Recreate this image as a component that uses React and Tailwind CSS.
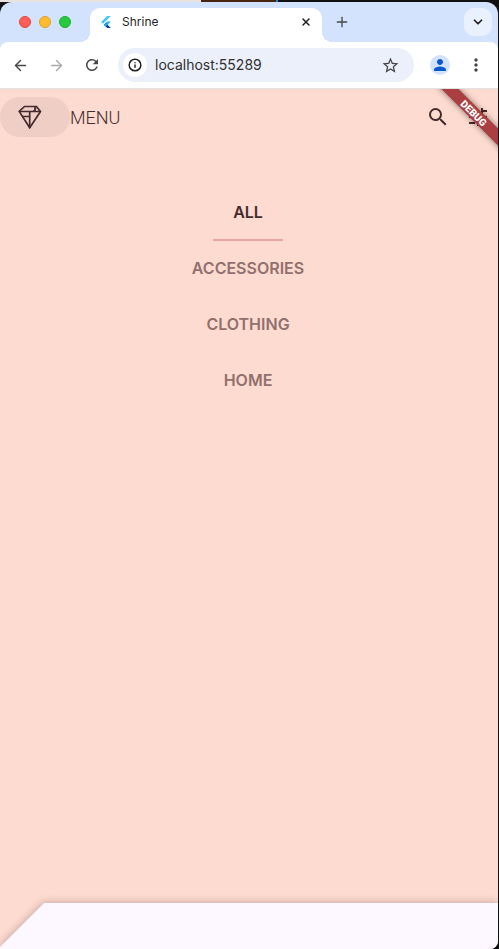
import { ArrowLeft, ArrowRight, Info, Plus, X, ChevronDown } from "lucide-react";
import { MdRefresh, MdStarBorder, MdPerson, MdMoreVert, MdSearch, MdTune } from "react-icons/md";

function FlutterLogo() {
  return (
    <svg viewBox="0 0 24 24" className="h-3 w-3 shrink-0" aria-hidden="true">
      <path d="M14.300 0 2.300 12 6 15.700 21.700 0z" fill="#47c5fb" />
      <path d="M14.300 11 7.900 17.500l3.700 3.700L21.700 11z" fill="#1fb0f5" />
      <path d="m11.600 13.800-3.700 3.700 6.400 6.500h7.400l-6.500-6.500z" fill="#03479b" />
      <path d="m7.900 17.500 3.700-3.700 3.700 3.700-3.700 3.700z" fill="#22a9f1" />
    </svg>
  );
}

function Diamond() {
  return (
    <svg viewBox="0 0 24 24" className="h-6 w-6" fill="none" stroke="currentColor" strokeWidth="1.700" aria-hidden="true">
      <path d="M6.500 1.500h12l4 5-10.800 16.300L1.200 6.500z" />
      <path d="M1.200 6.500h21.300M11.700 6.500v16.300M4.500 11.500h7.200M17 1.500v5" />
      <path d="m14.500 6.500 4-3.500" strokeWidth="1" />
    </svg>
  );
}

function TabStrip() {
  return (
    <div className="flex h-10 rounded-t-xl bg-[#d3e3fd]">
      <div className="flex w-20 shrink-0 items-center gap-2 pl-[19px]">
        <span className="h-3 w-3 rounded-full border border-[#e0443e] bg-[#ff5f57]" />
        <span className="h-3 w-3 rounded-full border border-[#dea123] bg-[#febc2e]" />
        <span className="h-3 w-3 rounded-full border border-[#1aab29] bg-[#28c840]" />
      </div>
      <div className="flex min-w-0 flex-1 items-end">
        <span className="h-2.5 w-2.5 shrink-0 bg-[radial-gradient(circle_at_0_0,#d3e3fd_10px,#fff_10px)]" />
        <div className="mt-1.5 flex h-[34px] min-w-0 max-w-58 flex-1 items-center self-start rounded-t-[10px] bg-white pr-2.5 pb-1.5 pl-2.5">
          <FlutterLogo />
          <span className="flex-1 truncate pl-2.5 text-xs text-[#1f1f1f]">Shrine</span>
          <button aria-label="Close tab"><X size={12} strokeWidth={3} color="#1f1f1f" /></button>
        </div>
        <span className="h-2.5 w-2.5 shrink-0 bg-[radial-gradient(circle_at_100%_0,#d3e3fd_10px,#fff_10px)]" />
        <button aria-label="New tab" className="mb-3 ml-0.5"><Plus size={16} strokeWidth={2} color="#474747" /></button>
      </div>
      <button aria-label="Search tabs" className="mt-1.5 mr-1.5 grid h-7 w-7 place-items-center rounded-[10px] bg-[#e9f0fe]">
        <ChevronDown size={14} strokeWidth={3} color="#1f1f1f" />
      </button>
    </div>
  );
}

function Toolbar() {
  return (
    <div className="bg-[#d3e3fd]">
      <div className="flex h-[47px] items-center rounded-t-lg border-b border-[#dfe3e3] bg-white px-3 text-[#474747]">
        <button aria-label="Back"><ArrowLeft size={17} /></button>
        <button aria-label="Forward" className="ml-[19px] text-[#aaa]"><ArrowRight size={17} /></button>
        <button aria-label="Reload" className="ml-[18px]"><MdRefresh size={18} /></button>
        <div className="ml-[17px] flex h-[34px] min-w-0 flex-1 items-center rounded-full bg-[#ecf0fa] pr-3.5 pl-[5px]">
          <button aria-label="Site information" className="grid h-6 w-6 shrink-0 place-items-center rounded-full bg-white">
            <Info size={14} strokeWidth={2.5} color="#1f1f1f" />
          </button>
          <input aria-label="Address" defaultValue="localhost:55289" className="ml-2 min-w-0 flex-1 bg-transparent text-sm text-[#303030] outline-none" />
          <button aria-label="Bookmark"><MdStarBorder size={19} /></button>
        </div>
        <button aria-label="Profile" className="ml-4 grid h-5 w-5 place-items-center rounded-full bg-[#d3e3fd] text-[#0b57d0]">
          <MdPerson size={18} />
        </button>
        <button aria-label="Browser menu" className="ml-4"><MdMoreVert size={20} /></button>
      </div>
    </div>
  );
}

function Header() {
  return (
    <header className="flex h-14 items-center pr-2">
      <button aria-label="Close menu" className="flex h-10 w-[70px] items-center rounded-full bg-[#efcec5] pl-[18px]">
        <Diamond />
      </button>
      <h1 className="flex-1 pt-0.5 font-[Roboto,sans-serif] text-lg font-light">MENU</h1>
      <button aria-label="Search" className="mr-4"><MdSearch size={24} /></button>
      <button aria-label="Filter"><MdTune size={24} /></button>
    </header>
  );
}

function Categories() {
  const items = ["ALL", "ACCESSORIES", "CLOTHING", "HOME"];
  return (
    <nav className="mt-10 flex flex-1 flex-col items-center pr-0.5 font-semibold">
      {items.map((item, i) => (
        <a
          key={item}
          href={"#" + item.toLowerCase()}
          className={i === 0 ? "flex h-14 w-[70px] flex-col items-center border-b-2 border-[#eaa4a4] pt-[15px]" : "h-14 pt-[15px] text-[#91706d]"}
        >
          {item}
        </a>
      ))}
    </nav>
  );
}

export default function App() {
  return (
    <div className="flex min-h-screen flex-col bg-[#111] pr-px font-[Inter,sans-serif]">
      <div className="flex h-0.5">
        <div className="w-[201px] bg-[#e9e3df]" />
        <div className="w-[75px] bg-[#49250f]" />
        <div className="w-0.5 bg-[#1686d9]" />
      </div>
      <TabStrip />
      <Toolbar />
      <main className="relative flex flex-1 flex-col overflow-hidden rounded-br-lg bg-[#fddbd0] text-[#442b2d]">
        <Header />
        <Categories />
        <div className="drop-shadow-[0_0_4px_rgba(68,43,45,0.35)]">
          <div className="h-[46px] bg-[#fdf7ff] [clip-path:polygon(44px_0,100%_0,100%_100%,0_100%,0_44px)]" />
        </div>
        <div className="absolute top-[18px] -right-10 flex h-3 w-32 rotate-45 items-center justify-center bg-[#ab3e40] font-[Roboto,sans-serif] text-[10px] font-black text-white shadow-[0_0_6px_rgba(0,0,0,0.5)]">
          DEBUG
        </div>
      </main>
    </div>
  );
}
